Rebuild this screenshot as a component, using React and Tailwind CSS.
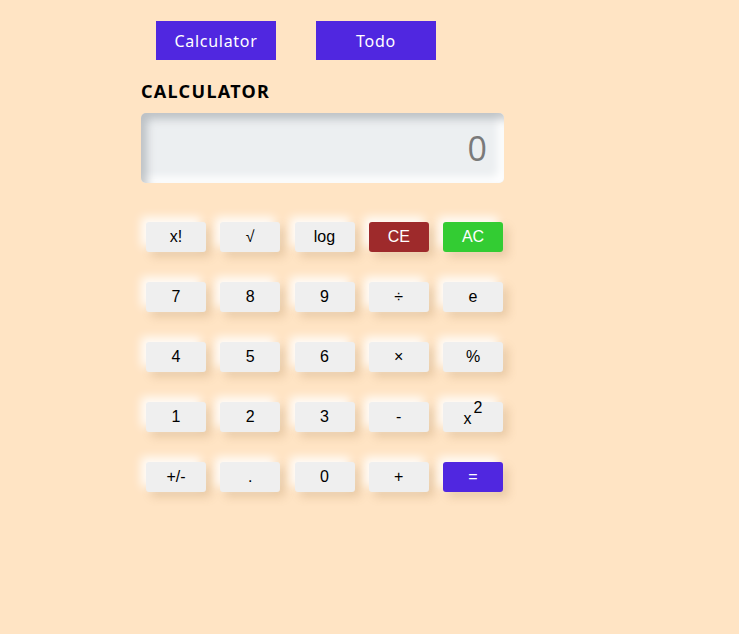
import React, { useState } from 'react';

const keys = [
  [{ label: 'x!' }, { label: '√' }, { label: 'log' }, { label: 'CE', tone: 'ce' }, { label: 'AC', tone: 'ac' }],
  [{ label: '7' }, { label: '8' }, { label: '9' }, { label: '÷' }, { label: 'e' }],
  [{ label: '4' }, { label: '5' }, { label: '6' }, { label: '×' }, { label: '%' }],
  [{ label: '1' }, { label: '2' }, { label: '3' }, { label: '-' }, { label: 'sq' }],
  [{ label: '+/-' }, { label: '.' }, { label: '0' }, { label: '+' }, { label: '=', tone: 'eq' }],
];

const toneClass = {
  ce: 'bg-[#9e2a2b] text-white',
  ac: 'bg-[#33cc33] text-white',
  eq: 'bg-[#5027e0] text-white',
};

function Key({ k }) {
  return (
    <button
      type="button"
      className={`w-[60px] h-[30px] rounded-[3px] text-[16px] leading-none flex items-center justify-center shadow-[-5px_-5px_10px_rgba(255,255,255,0.9),5px_5px_10px_rgba(150,110,60,0.22)] ${toneClass[k.tone] || 'bg-[#efefef] text-black'}`}
    >
      {k.label === 'sq' ? (
        <span className="flex items-start">
          <span className="mt-[3px]">x</span>
          <span className="ml-[2px] -mt-[8px]">2</span>
        </span>
      ) : (
        k.label
      )}
    </button>
  );
}

export default function App() {
  const [tab, setTab] = useState('calc');

  return (
    <div className="min-h-[634px] bg-[#ffe4c4] font-['Liberation_Sans',Arial,sans-serif]">
      {/* Tabs */}
      <div className="flex gap-[40px] pl-[156px] pt-[21px]">
        <button
          type="button"
          onClick={() => setTab('calc')}
          className="w-[120px] h-[39px] bg-[#5027e0] text-white text-[16px] tracking-[0.7px] font-['Noto_Sans',sans-serif]"
        >
          Calculator
        </button>
        <button
          type="button"
          onClick={() => setTab('todo')}
          className="w-[120px] h-[39px] bg-[#5027e0] text-white text-[16px] tracking-[0.7px] font-['Noto_Sans',sans-serif]"
        >
          Todo
        </button>
      </div>

      <div className="w-[363px] ml-[141px]">
        <h1 className="mt-[20px] text-[18px] font-bold tracking-[1.3px] text-black font-['Noto_Sans',sans-serif] leading-[22px]">
          CALCULATOR
        </h1>

        {/* Display */}
        <div className="mt-[11px] h-[70px] rounded-[5px] bg-[#eceff1] shadow-[inset_6px_6px_8px_rgba(150,155,160,0.55),inset_-6px_-6px_8px_rgba(255,255,255,1)] flex items-center justify-end pr-[17px]">
          <span className="text-[34px] text-[#7a7a7a] font-['Open_Sans',sans-serif]">0</span>
        </div>

        {/* Keypad */}
        <div className="mt-[39px] ml-[5px] w-[357px] flex flex-col gap-[30px]">
          {keys.map((row, i) => (
            <div key={i} className="flex justify-between">
              {row.map((k) => (
                <Key key={k.label} k={k} />
              ))}
            </div>
          ))}
        </div>
      </div>
    </div>
  );
}
